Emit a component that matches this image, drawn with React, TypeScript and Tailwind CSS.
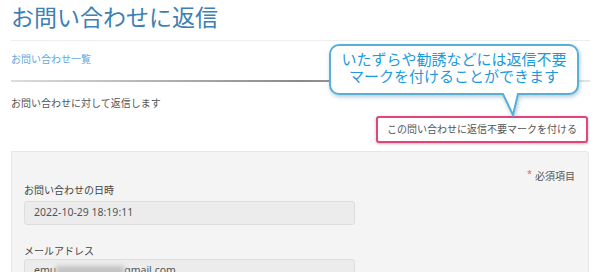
import React from 'react'

const font = { fontFamily: '"Noto Sans", "Noto Sans CJK JP", sans-serif' }

function Callout() {
  return (
    <div className="absolute left-[328px] top-[43px] w-[252px] h-[74px]">
      <svg
        width="252"
        height="74"
        viewBox="0 0 252 74"
        className="absolute inset-0 drop-shadow-[1px_2px_2px_rgba(40,110,150,0.35)]"
      >
        <path
          d="M11,2 H241 A9,9 0 0 1 250,11 V42 A9,9 0 0 1 241,51 H190 L185,72 L175,51 H11 A9,9 0 0 1 2,42 V11 A9,9 0 0 1 11,2 Z"
          fill="#ffffff"
          stroke="#58b0d8"
          strokeWidth="2"
        />
      </svg>
      <div className="relative pt-[8px] text-center text-[15px] leading-[17px] font-normal text-[#1b9ade]">
        <div>いたずらや勧誘などには返信不要</div>
        <div>マークを付けることができます</div>
      </div>
    </div>
  )
}

export default function App() {
  return (
    <div className="relative w-[600px] h-[272px] overflow-hidden bg-white" style={font}>
      <div className="pl-[11px] pr-[10px]">
        <h1 className="mt-[2px] text-[23px] leading-[30px] text-[#3c80b4] font-normal">
          お問い合わせに返信
        </h1>
        <div className="mt-[8px] h-px bg-[#eeeeee]" />
        <a className="block mt-[10px] text-[10px] leading-[16px] text-[#5ea8de]">
          お問い合わせ一覧
        </a>
        <div className="mt-[13px] h-[2px] bg-gradient-to-r from-[#dddddd] via-[#8a8a8a] to-[#e4e4e4]" />
        <p className="mt-[13px] text-[10px] leading-[16px] text-[#555555]">
          お問い合わせに対して返信します
        </p>
        <div className="flex justify-end pr-[2px] mt-[5px]">
          <button className="h-[27px] px-[9px] border-2 border-[#e3457a] rounded-[3px] bg-white text-[10px] text-[#555555] shadow-[0_1px_3px_rgba(0,0,0,0.25)]">
            この問い合わせに返信不要マークを付ける
          </button>
        </div>
        <div className="mt-[8px] mr-[1px] h-[140px] bg-[#f4f4f4] border border-[#e6e6e6] rounded-tr-[3px] px-[12px]">
          <div className="mt-[17px] flex justify-end pr-[1px] text-[10px] leading-[14px] text-[#555555]">
            <span className="text-[#ec5a5a] text-[9px] leading-[10px] mr-[3px]">*</span>
            必須項目
          </div>
          <label className="block text-[10px] leading-[14px] text-[#444444]">
            お問い合わせの日時
          </label>
          <div className="mt-[4px] w-[331px] h-[24px] bg-[#ececec] border border-[#dddddd] rounded-[3px] flex items-center px-[9px] text-[10.5px] text-[#555555]">
            2022-10-29 18:19:11
          </div>
          <label className="block mt-[19px] text-[10px] leading-[14px] text-[#444444]">
            メールアドレス
          </label>
          <div className="mt-[1px] w-[331px] h-[24px] bg-[#ececec] border border-[#dddddd] rounded-[3px] flex items-center px-[9px] text-[10.5px] text-[#555555]">
            emu<span className="inline-block w-[68px] h-[11px] bg-[#c4c4c4] blur-[2px]" />gmail.com
          </div>
        </div>
      </div>
      <Callout />
    </div>
  )
}
